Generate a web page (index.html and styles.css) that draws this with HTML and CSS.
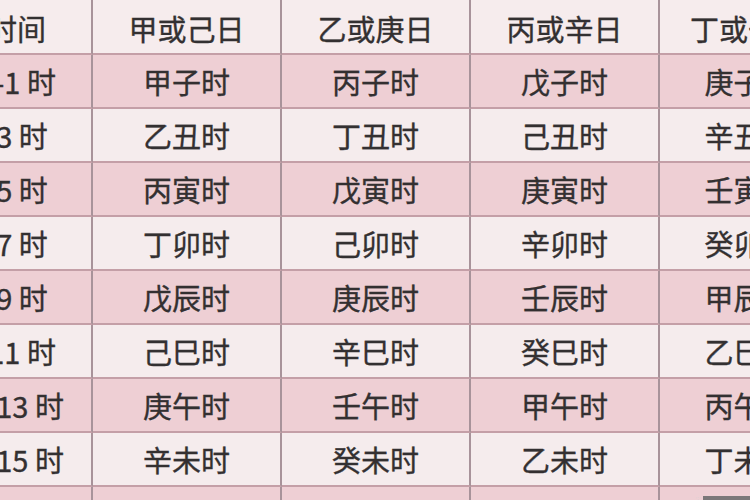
FILE: index.html
```html
<!DOCTYPE html>
<html lang="zh">
<head>
<meta charset="utf-8">
<title>时辰对照表</title>
<link rel="stylesheet" href="styles.css">
</head>
<body>
<div class="frame">
  <table class="hours">
    <colgroup>
      <col class="c-time">
      <col class="c-day"><col class="c-day"><col class="c-day"><col class="c-last"><col class="c-day">
    </colgroup>
    <thead>
      <tr class="head"><th>时间</th><th>甲或己日</th><th>乙或庚日</th><th>丙或辛日</th><th>丁或壬日</th><th>戊或癸日</th></tr>
    </thead>
    <tbody>
      <tr class="pink"><td>23-1 时</td><td>甲子时</td><td>丙子时</td><td>戊子时</td><td>庚子时</td><td>壬子时</td></tr>
      <tr class="light"><td>1-3 时</td><td>乙丑时</td><td>丁丑时</td><td>己丑时</td><td>辛丑时</td><td>癸丑时</td></tr>
      <tr class="pink"><td>3-5 时</td><td>丙寅时</td><td>戊寅时</td><td>庚寅时</td><td>壬寅时</td><td>甲寅时</td></tr>
      <tr class="light"><td>5-7 时</td><td>丁卯时</td><td>己卯时</td><td>辛卯时</td><td>癸卯时</td><td>乙卯时</td></tr>
      <tr class="pink"><td>7-9 时</td><td>戊辰时</td><td>庚辰时</td><td>壬辰时</td><td>甲辰时</td><td>丙辰时</td></tr>
      <tr class="light"><td>9-11 时</td><td>己巳时</td><td>辛巳时</td><td>癸巳时</td><td>乙巳时</td><td>丁巳时</td></tr>
      <tr class="pink"><td>11-13 时</td><td>庚午时</td><td>壬午时</td><td>甲午时</td><td>丙午时</td><td>戊午时</td></tr>
      <tr class="light"><td>13-15 时</td><td>辛未时</td><td>癸未时</td><td>乙未时</td><td>丁未时</td><td>己未时</td></tr>
      <tr class="pink"><td>15-17 时</td><td>壬申时</td><td>甲申时</td><td>丙申时</td><td>戊申时</td><td>庚申时</td></tr>
    </tbody>
  </table>
  <div class="mark"><span class="mark-dots">·:·</span><span class="mark-bar"></span></div>
</div>
</body>
</html>
```

FILE: styles.css
```css
html, body {
  margin: 0;
  padding: 0;
  overflow: hidden;
  background: #f4eced;
}
.frame {
  position: relative;
  width: 750px;
  height: 500px;
  overflow: hidden;
}
.hours {
  border-collapse: separate;
  border-spacing: 0;
  table-layout: fixed;
  width: 1100px;
  margin-left: -73px;
  margin-top: -8px;
  font-family: "Noto Sans CJK SC", "Noto Sans", sans-serif;
  font-size: 29px;
  color: #333031;
}
.c-time { width: 166px; }
.c-day { width: 189px; }
.c-last { width: 178px; }
.hours th,
.hours td {
  padding: 0;
  text-align: center;
  vertical-align: middle;
  font-weight: normal;
  border-right: 2px solid #a8939a;
  border-bottom: 2px solid #c49fa7;
  box-sizing: border-box;
  white-space: nowrap;
  line-height: 1;
  -webkit-text-stroke: 0.35px #333031;
}
.head th {
  height: 63px;
  padding-top: 12px;
  background: #f6eced;
}
.head th:first-child { padding-left: 16px; }
.hours tbody td { height: 54px; }
.pink td { background: #eecfd4; }
.light td { background: #f5eced; }
.mark {
  position: absolute;
  right: 0;
  bottom: 0;
  display: flex;
  align-items: flex-end;
  gap: 2px;
}
.mark-dots {
  font-family: "DejaVu Sans", sans-serif;
  font-size: 6px;
  line-height: 5px;
  color: #d8d0d2;
}
.mark-bar {
  width: 47px;
  height: 4px;
  background: #7b7779;
}
```
